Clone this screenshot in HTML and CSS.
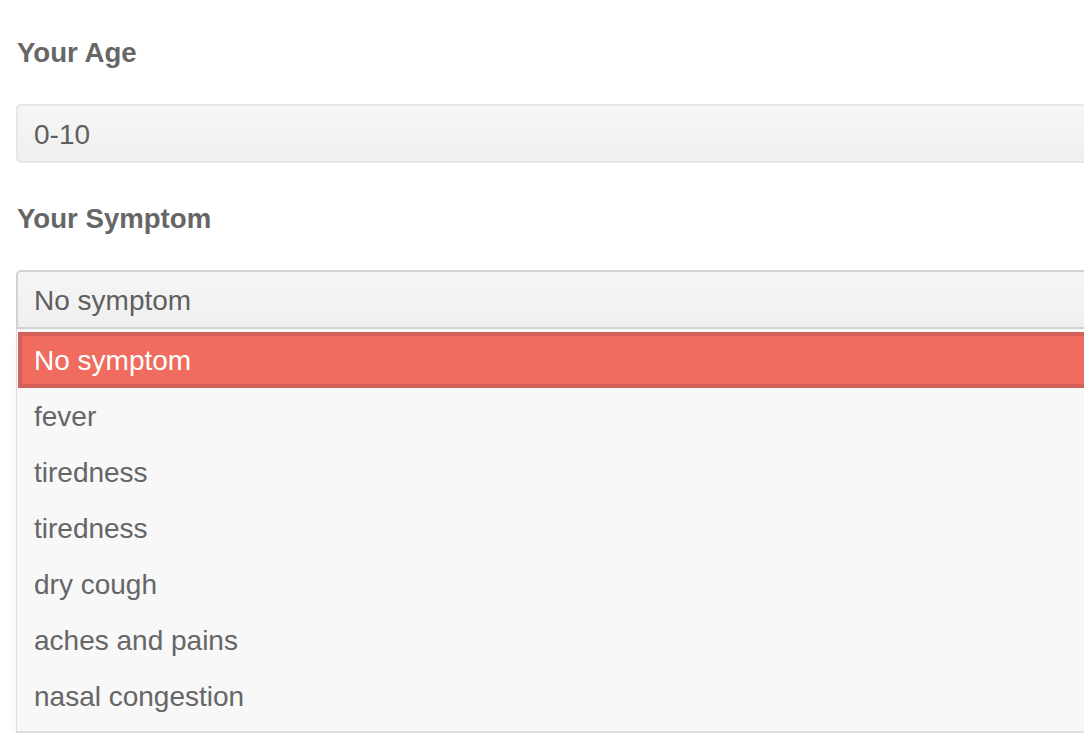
FILE: index.html
```html
<!DOCTYPE html>
<html lang="en">
<head>
<meta charset="utf-8">
<title>Symptom checker</title>
<link rel="stylesheet" href="styles.css">
</head>
<body>
<main class="form">
  <section class="field">
    <h2 class="field-label">Your Age</h2>
    <div class="select-box select-box--idle">0-10</div>
  </section>
  <section class="field field--second">
    <h2 class="field-label">Your Symptom</h2>
    <div class="dropdown">
      <div class="select-box select-box--open">No symptom</div>
      <ul class="option-list">
        <li class="option option--active">No symptom</li>
        <li class="option">fever</li>
        <li class="option">tiredness</li>
        <li class="option">tiredness</li>
        <li class="option">dry cough</li>
        <li class="option">aches and pains</li>
        <li class="option">nasal congestion</li>
      </ul>
    </div>
  </section>
</main>
</body>
</html>
```

FILE: styles.css
```css
html, body {
  margin: 0;
  padding: 0;
  background: #ffffff;
  overflow: hidden;
}

body {
  font-family: "Liberation Sans", Arial, sans-serif;
  color: #666666;
}

.form {
  width: 1200px;
  padding: 37px 0 0 16px;
  display: flex;
  flex-direction: column;
}

.field {
  display: flex;
  flex-direction: column;
}

.field--second {
  margin-top: 40px;
}

.field-label {
  margin: 0 0 35px 1px;
  font-size: 27.6px;
  line-height: 32px;
  font-weight: bold;
  color: #666666;
}

.select-box {
  box-sizing: border-box;
  height: 59px;
  padding: 2px 0 0 16px;
  display: flex;
  align-items: center;
  font-size: 28px;
  color: #5f5f5f;
  border-radius: 5px;
  background: linear-gradient(#f6f6f6, #efefef);
}

.select-box--idle {
  border: 2px solid #e7e7e7;
}

.select-box--open {
  border: 2px solid #d2d2d2;
  border-radius: 5px 0 0 0;
}

.option-list {
  list-style: none;
  margin: 0;
  padding: 3px 0 7px 1px;
  background: #f8f8f8;
  border-left: 1px solid #dcdcdc;
  border-bottom: 2px solid #dedede;
  box-shadow: 0 6px 10px rgba(0, 0, 0, 0.05);
}

.option {
  box-sizing: border-box;
  height: 56px;
  padding: 2px 0 0 16px;
  display: flex;
  align-items: center;
  font-size: 28px;
  color: #666666;
}

.option--active {
  background: #ef6c5f;
  color: #ffffff;
  border: 4px solid #d4605a;
  border-right: none;
  padding-left: 12px;
}
```
